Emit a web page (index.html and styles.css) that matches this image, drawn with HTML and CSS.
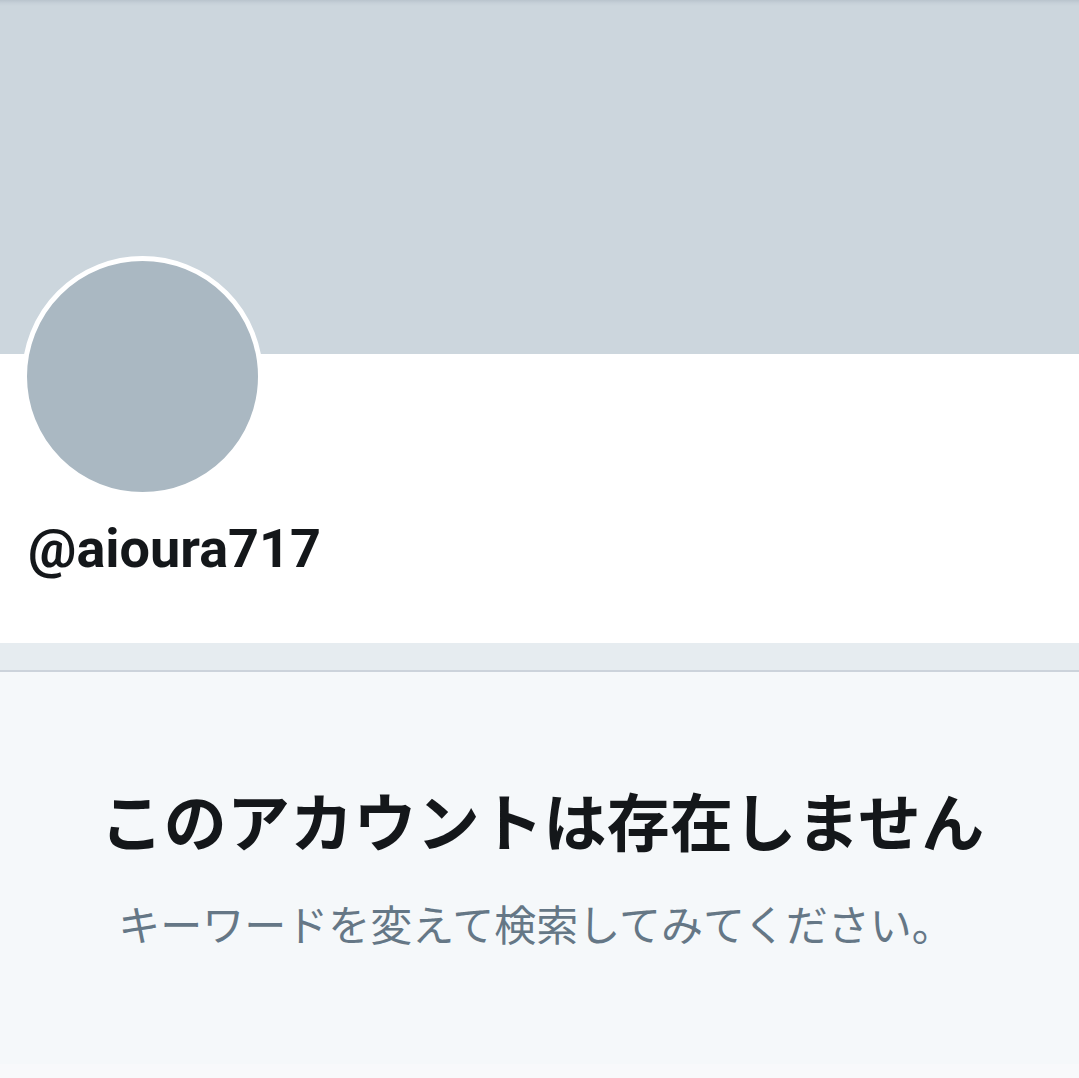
FILE: index.html
```html
<!DOCTYPE html>
<html lang="ja">
<head>
    <meta charset="UTF-8">
    <meta name="viewport" content="width=device-width, initial-scale=1.0">
    <title>@aioura717</title>
    <link rel="stylesheet" href="styles.css">
</head>
<body>
    <div class="page">
        <div class="banner"></div>
        <div class="profile">
            <div class="avatar"></div>
            <div class="handle">@aioura717</div>
        </div>
        <div class="divider"></div>
        <div class="empty-state">
            <h2 class="empty-title">このアカウントは存在しません</h2>
            <p class="empty-text">キーワードを変えて検索してみてください。</p>
        </div>
        <div class="bottom-strip"></div>
    </div>
</body>
</html>
```

FILE: styles.css
```css
body { margin: 0; background-color: #fff; font-family: Roboto, "Noto Sans CJK JP", sans-serif; color: #14171a; }
.page { width: 100%; min-height: 100vh; display: flex; flex-direction: column; overflow: hidden; }
.banner { height: 354px; background: linear-gradient(to bottom, #b9c4cd 0, #c6d0d8 3px, #ccd6dd 6px, #ccd6dd 100%); }
.profile { height: 289px; background-color: #fff; padding-left: 22px; box-sizing: border-box; }
.avatar { width: 231px; height: 231px; border-radius: 50%; background-color: #aab8c2; border: 5px solid #fff; margin-top: -98px; }
.handle { margin-top: 20px; padding-left: 6px; font-family: Roboto, sans-serif; font-weight: 700; font-size: 54px; line-height: 64px; color: #14171a; }
.divider { height: 27px; background-color: #e6ecf0; border-bottom: 2px solid #ccd3db; }
.empty-state { flex: 1; background-color: #f5f8fa; text-align: center; padding-top: 110px; }
.empty-title { margin: 0; padding-left: 6px; font-family: "Noto Sans CJK JP", sans-serif; font-weight: 700; font-size: 63px; letter-spacing: 0.3px; line-height: 74px; color: #14171a; }
.empty-text { margin: 42px 0 0; padding-right: 7px; font-family: "Noto Sans CJK JP", sans-serif; font-weight: 400; font-size: 42px; line-height: 50px; color: #657786; }
.bottom-strip { height: 14px; background-color: #f8f9fb; }
```
